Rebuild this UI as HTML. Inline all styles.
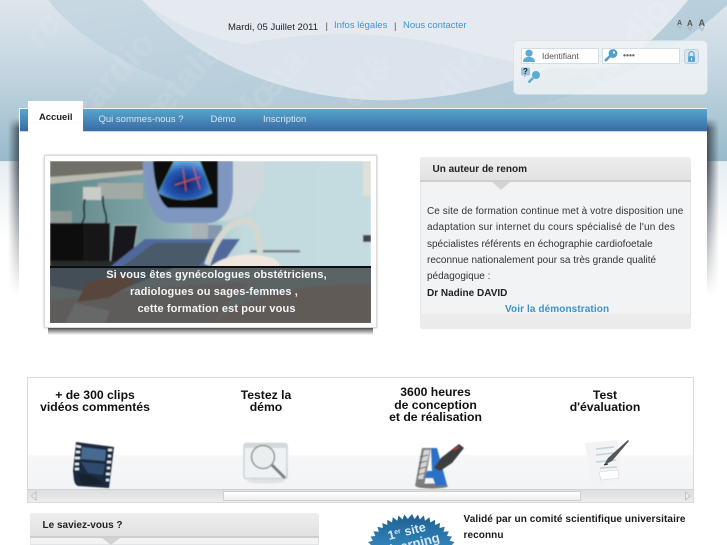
<!DOCTYPE html>
<html lang="fr"><head><meta charset="utf-8"><title>Accueil</title>
<style>
html,body{margin:0;padding:0;background:#fff}
body{width:727px;height:545px;overflow:hidden;position:relative;font-family:"Liberation Sans",sans-serif}
.a{position:absolute;white-space:nowrap}
svg{position:absolute;display:block}
.h{font-weight:bold;font-size:12.2px;line-height:12.5px;text-align:center;color:#111}
.nav{top:113.5px;font-size:9.5px;color:#d5e6f0}
.l{font-size:10px;line-height:16.3px;color:#333;left:427px}
.fld{background:#fff;border:1px solid #d6dde3;height:14px}
.sz{font-weight:bold;color:#555}
.re{font-weight:bold;color:#999;opacity:.5;transform:scaleY(-.7);transform-origin:50% 100%}
</style></head><body>

<svg style="left:0;top:0" width="727" height="163" viewBox="0 0 727 163">
<defs>
<linearGradient id="bg" x1="0" y1="0" x2="0" y2="1"><stop offset="0" stop-color="#dfe6ec"/><stop offset=".45" stop-color="#c3d5e0"/><stop offset="1" stop-color="#96b9ca"/></linearGradient>
<linearGradient id="band" x1="0" y1="0" x2="1" y2="1"><stop offset="0" stop-color="#c9d9e3"/><stop offset="1" stop-color="#a9c5d4"/></linearGradient>
</defs>
<rect width="727" height="163" fill="url(#bg)"/>
<path d="M48 0C90 55 190 100 290 112L500 112C590 100 680 50 727 5L727 0Z" fill="url(#band)"/>
<path d="M142 0C190 55 270 95 370 100C470 104 590 65 680 0Z" fill="#dbe4ec"/>
<path d="M245 44C320 28 400 32 465 50C530 68 575 72 618 66C650 45 672 20 688 0L142 0C165 20 200 36 245 44Z" fill="#e5eaf1"/>
<g font-family="Liberation Sans" font-size="36" fill="#fff" opacity=".08" font-weight="bold">
<text transform="translate(85 125) rotate(-48)">cardio</text>
<text transform="translate(150 135) rotate(-48)">fœtale</text>
<text transform="translate(255 120) rotate(-48)">fœta</text>
<text transform="translate(355 110) rotate(-48)">of&amp;</text>
<text transform="translate(450 100) rotate(-48)">dio</text>
<text transform="translate(40 50) rotate(-48)">rc</text>
<text transform="translate(600 90) rotate(-48)">cardio</text>
</g>
<rect y="161" width="727" height="2" fill="#dfe7ed"/>
</svg>

<div style="position:absolute;left:0;top:162px;width:19px;height:130px;background:linear-gradient(180deg,#e6edf2,#fff 60%)"></div>
<div style="position:absolute;left:708px;top:162px;width:19px;height:130px;background:linear-gradient(180deg,#e6edf2,#fff 60%)"></div>
<div style="position:absolute;left:8px;top:118px;width:12px;height:177px;background:linear-gradient(90deg,rgba(50,60,70,0),rgba(50,60,70,.85));-webkit-mask-image:linear-gradient(180deg,transparent 0,#000 6%,#000 28%,transparent 100%);mask-image:linear-gradient(180deg,transparent 0,#000 6%,#000 28%,transparent 100%)"></div>
<div style="position:absolute;left:707px;top:118px;width:12px;height:177px;background:linear-gradient(270deg,rgba(50,60,70,0),rgba(50,60,70,.85));-webkit-mask-image:linear-gradient(180deg,transparent 0,#000 6%,#000 28%,transparent 100%);mask-image:linear-gradient(180deg,transparent 0,#000 6%,#000 28%,transparent 100%)"></div>

<!-- container -->
<div style="position:absolute;left:19px;top:108px;width:688px;height:437px;background:#fff;border-left:1px solid #fff;box-sizing:border-box"></div>
<div style="position:absolute;left:20px;top:109px;width:687px;height:22px;background:linear-gradient(180deg,#55a6cb,#3a6aa6);box-shadow:0 -1px 0 #eef4f8,0 1px 0 #c5d5e2"></div>
<div style="position:absolute;left:28px;top:101px;width:55px;height:31px;background:linear-gradient(180deg,#fff 70%,#f7f7f7 70%,#fff 74%)"></div>
<div class="a" style="left:39px;top:111.5px;font-size:9.5px;font-weight:bold;color:#222;letter-spacing:-.05px">Accueil</div>
<div class="a nav" style="left:98.5px">Qui sommes-nous ?</div>
<div class="a nav" style="left:210.5px">Démo</div>
<div class="a nav" style="left:263px">Inscription</div>

<!-- top links -->
<div class="a" style="left:228px;top:21.7px;font-size:9.5px;color:#222;letter-spacing:.02px">Mardi, 05 Juillet 2011</div>
<div class="a" style="left:325.5px;top:21px;font-size:9.5px;color:#555">|</div>
<div class="a" style="left:334px;top:20px;font-size:9.5px;color:#3b95cf">Infos légales</div>
<div class="a" style="left:394px;top:21px;font-size:9.5px;color:#555">|</div>
<div class="a" style="left:403px;top:20px;font-size:9.5px;color:#3b95cf;letter-spacing:-.03px">Nous contacter</div>
<div class="a sz" style="left:677px;top:19.700px;font-size:7px">A</div>
<div class="a sz" style="left:687px;top:18.900px;font-size:8px">A</div>
<div class="a sz" style="left:698.500px;top:18px;font-size:9px">A</div>
<div class="a re" style="left:677px;top:16.500px;font-size:7px">A</div>
<div class="a re" style="left:687px;top:15.500px;font-size:8px">A</div>
<div class="a re" style="left:698.500px;top:14.500px;font-size:9px">A</div>

<!-- login -->
<div style="position:absolute;left:514px;top:41px;width:193px;height:53px;background:rgba(240,243,246,.85);border-radius:4px;box-shadow:0 0 0 1px rgba(215,225,232,.7)"></div>
<div class="fld" style="position:absolute;left:521px;top:48px;width:76px"></div>
<div class="fld" style="position:absolute;left:602px;top:48px;width:76px"></div>
<div class="a" style="left:542px;top:51px;font-size:8.5px;color:#555">Identifiant</div>
<div class="a" style="left:623px;top:50px;font-size:8.5px;color:#666;font-weight:bold">••••</div>
<svg style="left:522px;top:49px" width="16" height="14" viewBox="0 0 16 14"><circle cx="7" cy="4.200" r="3.600" fill="#5cabd6"/><path d="M1 13C1 9 4 8 7 8S13 9 13 13Z" fill="#5cabd6"/></svg>
<svg style="left:603px;top:48px" width="16" height="15" viewBox="0 0 16 15"><circle cx="10" cy="5.500" r="4.400" fill="#4a9fcf"/><path d="M7 8L2 13M2.500 10.500L4.500 12.500" stroke="#4a9fcf" stroke-width="2.400" fill="none"/><circle cx="11" cy="4.500" r="1.200" fill="#fff"/></svg>
<div style="position:absolute;left:684px;top:49px;width:13px;height:13px;background:#dde6ee;border:1px solid #c3ced7;border-radius:3px"></div>
<svg style="left:685px;top:50px" width="13" height="13" viewBox="0 0 13 13"><path d="M4 6V4a2.500 2.500 0 0 1 5 0V6" stroke="#5ba7d3" stroke-width="1.200" fill="none"/><rect x="3" y="6" width="7" height="6" rx="1" fill="#5ba7d3"/><rect x="6" y="8" width="1" height="2.500" fill="#fff"/></svg>
<svg style="left:520px;top:67px" width="22" height="17" viewBox="0 0 22 17"><path d="M1 2a1.500 1.500 0 0 1 1.500-1.500h6A1.500 1.500 0 0 1 10 2v5a1.500 1.500 0 0 1-1.500 1.500H6L4 11V8.500H2.500A1.500 1.500 0 0 1 1 7Z" fill="#9cc3de"/><circle cx="16" cy="8" r="4" fill="#5cabd6"/><path d="M13 11L8.500 15.500" stroke="#5cabd6" stroke-width="2.400"/></svg>
<div class="a" style="left:523px;top:67px;font-size:8px;font-weight:bold;color:#123">?</div>

<!-- hero -->
<div style="position:absolute;left:48px;top:328px;width:325px;height:7px;background:linear-gradient(180deg,#555,rgba(120,120,120,0))"></div>
<div style="position:absolute;left:44px;top:155px;width:331px;height:171px;background:#fff;border:1px solid #d9d9d9;box-shadow:0 0 2px rgba(0,0,0,.25)"></div>
<svg style="left:50px;top:161px" width="321" height="162" viewBox="0 0 321 162">
<defs>
<filter id="b" x="0" y="0" width="100%" height="100%"><feGaussianBlur stdDeviation=".8"/></filter>
<linearGradient id="wall" x1="0" y1="0" x2="1" y2="0"><stop offset="0" stop-color="#5f8587"/><stop offset=".3" stop-color="#7ea3a6"/><stop offset=".6" stop-color="#c2dade"/><stop offset="1" stop-color="#c4dbe0"/></linearGradient>
<radialGradient id="us" cx=".5" cy=".6" r=".6"><stop offset="0" stop-color="#14236a"/><stop offset=".6" stop-color="#2558b5"/><stop offset="1" stop-color="#6aa9e0"/></radialGradient>
</defs>
<g filter="url(#b)">
<rect width="321" height="162" fill="url(#wall)"/>
<path d="M0 0H93V10L0 16Z" fill="#6f6f69"/>
<path d="M0 16L93 9V13L0 23Z" fill="#b9bab0"/>
<rect x="48" y="22" width="45" height="16" fill="#a2aaa6"/>
<rect x="33" y="26" width="18" height="13" fill="#c9cdc6"/>
<path d="M35 38C32 50 37 55 32 62M53 35C52 50 58 52 56 62" stroke="#111" stroke-width="1.600" fill="none"/>
<rect x="0" y="50" width="22" height="12" fill="#8e9a95"/>
<rect x="0" y="62" width="33" height="40" fill="#070707"/>
<rect x="33" y="62" width="27" height="42" fill="#141819"/>
<path d="M64 64H88L82 104H60Z" fill="#16191a" stroke="#a7b4b5"/>
<rect x="0" y="100" width="90" height="6" fill="#25292a"/>
<path d="M93 0H214V25C210 45 190 58 175 60H120C104 58 94 35 93 0Z" fill="#cfd9dd"/>
<path d="M93 0H183V30C182 50 172 60 160 62H118C100 58 94 35 93 0Z" fill="#7f97c0"/>
<path d="M103 0H168V47H118C108 40 104 20 103 0Z" fill="#0c0b0a"/>
<path d="M108 32L124 0H150L162 32C145 41 125 41 108 32Z" fill="url(#us)" stroke="#4f8f6a" stroke-width=".6"/>
<path d="M133 8L136 30M143 5L150 28M125 24L150 16" stroke="#d75a3a" stroke-width="1"/>
<rect x="142" y="62" width="16" height="16" fill="#a9b3b5"/>
<rect x="158" y="64" width="14" height="14" fill="#8498ad"/>
<path d="M60 106L95 78H190L170 106Z" fill="#4f6a9a"/>
<path d="M72 106L104 82H168L148 106Z" fill="#4a5a6a"/>
<rect x="200" y="89" width="50" height="2.500" fill="#777f80"/>
<path d="M157 104C165 80 178 60 195 60C206 60 210 75 210 92" stroke="#d6d8ce" stroke-width="6" fill="none"/>
<path d="M160 106C172 96 190 92 207 94C226 96 232 102 229 107H160Z" fill="#efe7dd"/>
<rect x="313" y="74" width="8" height="7" fill="#444"/>
<rect x="313" y="0" width="8" height="35" fill="#dfe0da"/>
<rect x="0" y="106" width="321" height="56" fill="#bcd3d7"/>
<path d="M0 106H125L60 134L0 125Z" fill="#6f92ad"/>
<path d="M165 162C190 135 260 120 321 124V162Z" fill="#cdbcb1"/>
<path d="M0 140C60 132 130 122 200 122C180 140 170 150 165 162H0Z" fill="#c5bdb7"/>
<path d="M27 141L36 122L72 113L86 121L58 137Z" fill="#b07a5f"/>
<path d="M15 162L25 142L60 150L55 162Z" fill="#dfe2e2"/>
</g>
<rect y="106" width="321" height="56" fill="rgba(45,45,45,.68)"/>
<rect y="105" width="321" height="2" fill="#0d0d0d"/>
</svg>
<div class="a" style="left:56px;width:321px;top:266.500px;text-align:center;font-size:11px;font-weight:bold;line-height:17.200px;color:#f5f5f5;letter-spacing:.12px">Si vous êtes gynécologues obstétriciens,<br><span style="position:relative;left:-2.500px">radiologues ou sages-femmes ,</span><br>cette formation est pour vous</div>

<!-- author panel -->
<div style="position:absolute;left:420px;top:157px;width:271px;height:172px;background:#f1f3f5;border-radius:3px;box-shadow:0 0 0 1px #e3e4e6 inset;overflow:hidden">
<div style="height:23px;background:linear-gradient(180deg,#eeeeee,#e2e2e2);border-bottom:2px solid #cfcfcf"></div>
<div style="position:absolute;left:0;bottom:0;width:100%;height:15px;background:#ebebeb"></div>
</div>
<svg style="left:492px;top:182px" width="18" height="8" viewBox="0 0 18 8"><path d="M0 0H18L9 8Z" fill="#d3d3d3"/></svg>
<div class="a" style="left:432.500px;top:164px;font-size:10px;font-weight:bold;color:#222">Un auteur de renom</div>
<div class="a l" style="top:204.200px"><span style="letter-spacing:.07px">Ce site de formation continue met à votre disposition une</span><br><span style="letter-spacing:.18px">adaptation sur internet du cours spécialisé de l'un des</span><br>spécialistes référents en échographie cardiofoetale<br>reconnue nationalement pour sa très grande qualité<br>pédagogique :<br><b style="color:#222">Dr Nadine DAVID</b></div>
<div class="a" style="left:505px;top:303.800px;font-size:10px;font-weight:bold;color:#3b93cf;letter-spacing:.1px">Voir la démonstration</div>

<!-- features -->
<div style="position:absolute;left:27px;top:377px;width:665px;height:124px;background:linear-gradient(180deg,#fff 62%,#f6f7f8 62.500%,#f3f4f5 90%);border:1px solid #d8dadb"></div>
<div class="a h" style="left:25px;width:140px;top:388.500px">+ de 300 clips<br>vidéos commentés</div>
<div class="a h" style="left:196px;width:140px;top:388.500px">Testez la<br>démo</div>
<div class="a h" style="left:365.500px;width:140px;top:386px">3600 heures<br>de conception<br>et de réalisation</div>
<div class="a h" style="left:535px;width:140px;top:388.500px">Test<br>d'évaluation</div>

<svg style="left:70px;top:441px" width="46" height="48" viewBox="0 0 46 48">
<filter id="s"><feGaussianBlur stdDeviation=".5"/></filter>
<g filter="url(#s)">
<path d="M6 1L44 6L39 47L8 45C3 43 4 35 3 30Z" fill="#1b2c40"/>
<path d="M12 6L36 9L35 20L11 18Z" fill="#466a90"/>
<path d="M11 21L35 23L33 34L18 32Z" fill="#2f4c6d"/>
<path d="M8 33C14 31 28 36 33 43L12 44Z" fill="#15212e"/>
<path d="M6 5L11 6M6 11L10 11M5 17L10 17M5 23L9 23M5 28L9 28M38 9L42 9M38 15L41 15M37 21L41 21M37 27L40 27M36 33L40 33M36 39L39 39" stroke="#e8eef2" stroke-width="2.400"/>
</g></svg>

<svg style="left:242px;top:442px" width="48" height="44" viewBox="0 0 48 44">
<filter id="s2"><feGaussianBlur stdDeviation=".4"/></filter>
<g filter="url(#s2)">
<ellipse cx="24" cy="39" rx="19" ry="2.500" fill="#e2e2e2"/>
<rect x="2" y="1.500" width="43" height="35" rx="2" fill="#eef2f4" stroke="#ccd1d5" stroke-width="1.500"/>
<rect x="2" y="1.500" width="43" height="4.500" fill="#d4d9dd"/>
<circle cx="21" cy="15" r="11.500" fill="#eaeeef" stroke="#8f9495" stroke-width="1.500"/>
<path d="M30 23L43 36" stroke="#777c7e" stroke-width="3"/>
</g></svg>

<svg style="left:412px;top:441px" width="54" height="50" viewBox="0 0 54 50">
<filter id="s3"><feGaussianBlur stdDeviation=".5"/></filter>
<g filter="url(#s3)">
<ellipse cx="20" cy="45" rx="16" ry="2.500" fill="#777"/>
<path d="M10 7L19 7L12 45L3 45Z" fill="#7e7e7e"/>
<path d="M12 9L18 9L11 38L6 38Z" fill="#d6d6d6"/>
<path d="M8 16L16 14M7 22L15 20M6 28L14 26M5 34L13 32" stroke="#666" stroke-width="1"/>
<path d="M19 7L25 7L35 44L24 45L21 37L13 37L15 30L20 30Z" fill="#2a72c8"/>
<path d="M22 27L29 17L47 3L52 7L40 22L28 30Z" fill="#3c3c3c"/>
<path d="M42 9L47 6" stroke="#b03a2a" stroke-width="1.500"/>
</g></svg>

<svg style="left:582px;top:439px" width="48" height="50" viewBox="0 0 48 50">
<filter id="s4"><feGaussianBlur stdDeviation=".35"/></filter>
<g filter="url(#s4)">
<path d="M3 4L35 1L41 44L10 47Z" fill="#f1f3f4"/>
<path d="M14 10L32 8M14 16L32 14M14 23L34 21M18 29L35 28" stroke="#c3d2dc" stroke-width="1.600"/>
<path d="M17 33L36 31L37 39L19 41Z" fill="#fff" stroke="#d2d8dc" stroke-width=".6"/>
<path d="M22 26L26 19L46 1L47 2L30 22Z" fill="#555"/>
<path d="M22 26L26 25" stroke="#222" stroke-width="1"/>
</g></svg>

<!-- scrollbar -->
<div style="position:absolute;left:28px;top:489px;width:665px;height:13px;background:linear-gradient(180deg,#dcdedf,#eceded);border-top:1px solid #cfd1d2;box-sizing:border-box"></div>
<div style="position:absolute;left:223px;top:491px;width:358px;height:10px;background:linear-gradient(180deg,#fff,#eee);border:1px solid #cfd1d2;box-sizing:border-box"></div>
<svg style="left:30px;top:491px" width="8" height="10"><path d="M6 1L1.500 5L6 9Z" fill="#eee" stroke="#b5b8ba" stroke-width=".8"/></svg>
<svg style="left:684px;top:491px" width="8" height="10"><path d="M1.500 1L6 5L1.500 9Z" fill="#eee" stroke="#b5b8ba" stroke-width=".8"/></svg>

<!-- bottom panel -->
<div style="position:absolute;left:30px;top:513px;width:289px;height:32px;background:#f1f3f5;border-radius:3px 3px 0 0;box-shadow:0 0 0 1px #e3e4e6 inset;overflow:hidden"><div style="height:23px;background:linear-gradient(180deg,#eeeeee,#e2e2e2);border-bottom:2px solid #cfcfcf"></div></div>
<svg style="left:102px;top:538px" width="18" height="7" viewBox="0 0 18 7"><path d="M0 0H18L9 7Z" fill="#d3d3d3"/></svg>
<div class="a" style="left:42.500px;top:520px;font-size:10px;font-weight:bold;color:#222">Le saviez-vous ?</div>

<svg style="left:360px;top:505px" width="110" height="40" viewBox="0 0 110 40">
<defs><linearGradient id="bl" x1="0" y1="0" x2="0" y2="1"><stop offset="0" stop-color="#1f5f90"/><stop offset="1" stop-color="#2f82b8"/></linearGradient></defs>
<path fill="url(#bl)" d="M52 9L54.500 14L58 9.500L59.800 14.500L63.800 10.500L65 15.700L69.500 12.300L70.200 17.500L75 14.800L75 20L80 18L79.500 23L84.800 21.800L83.500 26.800L88.800 26.200L87 31L92 31.500L89.500 35.800L94.400 37L92 40L11 40L8 37L12.900 35.800L10.500 31.500L15.400 31L13.500 26.200L18.800 26.800L17.500 21.800L22.800 23L22.300 18L27.300 20L27.300 14.800L32 17.500L32.800 12.300L37.300 15.700L38.500 10.500L42.500 14.500L44.300 9.500L47.800 14Z"/>
<g fill="#d8e9f3" font-family="Liberation Sans" font-weight="bold">
<text transform="translate(29 35) rotate(-14)" font-size="12.500">1<tspan font-size="7" dy="-4">er</tspan><tspan dy="4"> site</tspan></text>
<text transform="translate(20 51.500) rotate(-14)" font-size="13">e-learning</text>
</g>
</svg>

<div class="a" style="left:463.500px;top:512px;font-size:10px;line-height:16px;font-weight:bold;color:#1a1a1a;letter-spacing:.09px">Validé par un comité scientifique universitaire<br>reconnu</div>

</body></html>
